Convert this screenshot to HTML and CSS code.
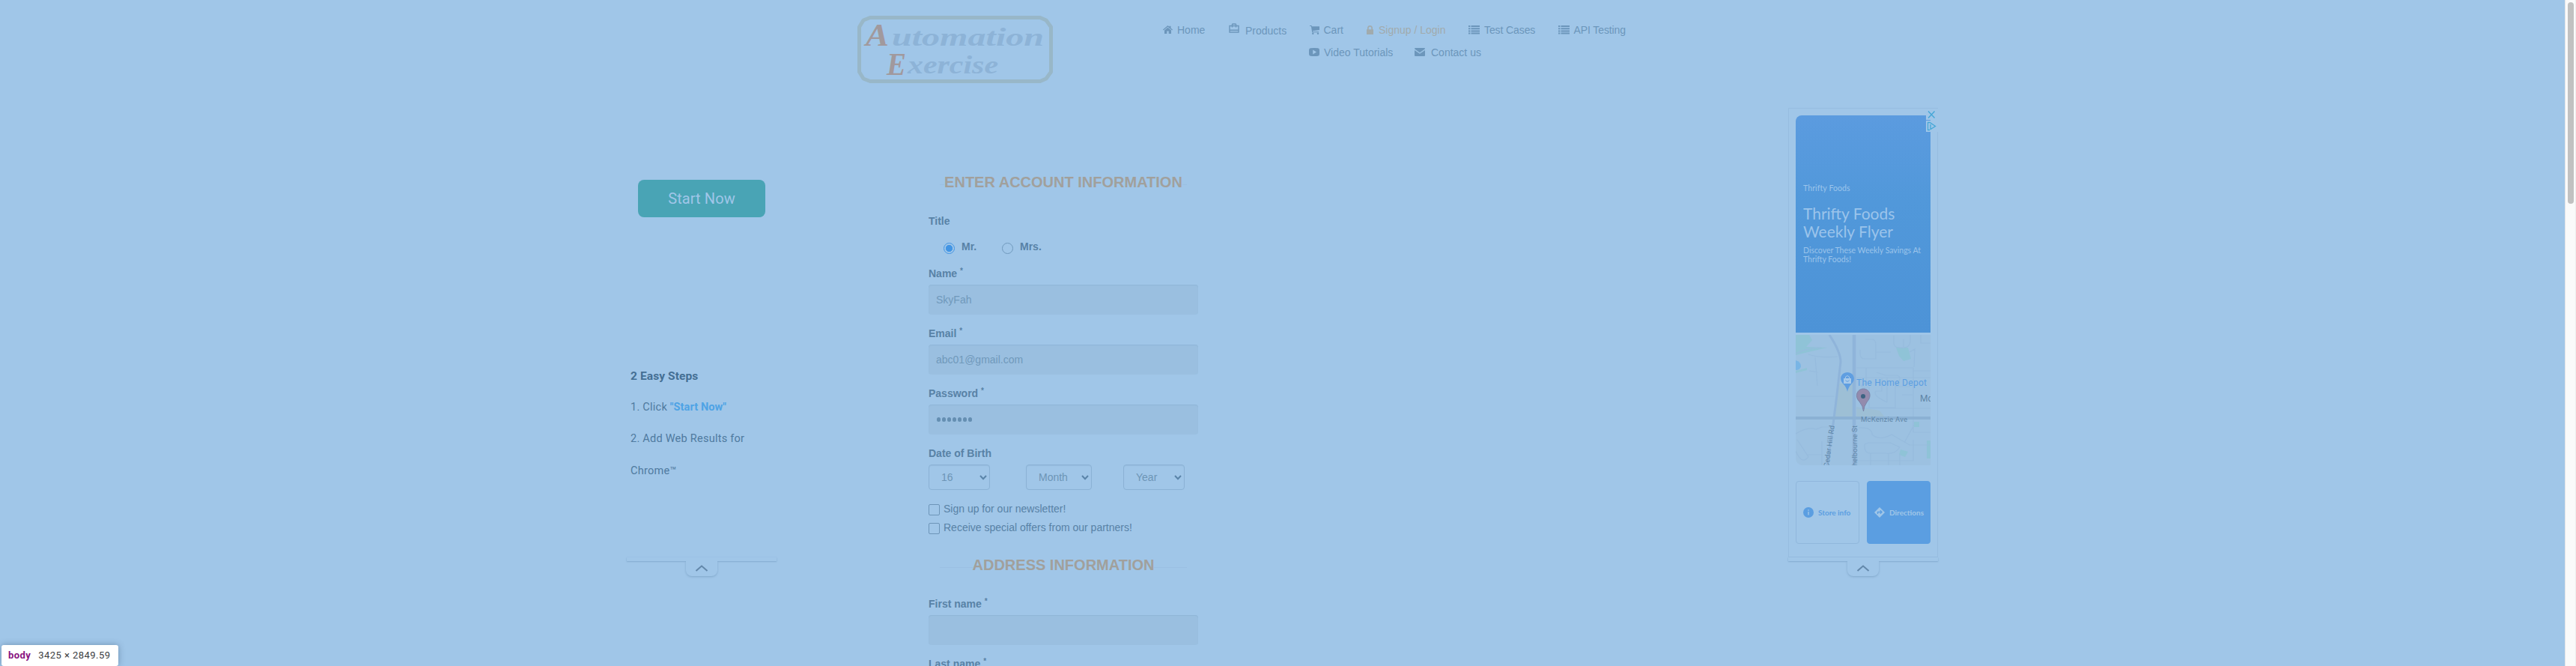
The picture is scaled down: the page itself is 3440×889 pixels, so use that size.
FILE: index.html
```html
<!DOCTYPE html>
<html lang="en">
<head>
<meta charset="utf-8">
<title>Automation Exercise - Signup</title>
<link rel="stylesheet" href="styles.css">
</head>
<body>
<svg width="0" height="0" class="defs">
  <symbol id="i-list" viewBox="0 0 15 12"><path d="M0 0h2.4v2H0zM0 3.2h2.4v2H0zM0 6.4h2.4v2H0zM0 9.6h2.4v2H0zM3.5 0H15v2H3.5zM3.5 3.2H15v2H3.5zM3.5 6.4H15v2H3.5zM3.5 9.6H15v2H3.5z"/></symbol>
</svg>
<div class="page">
  <header class="header">
    <svg class="logo" viewBox="0 0 261 90" width="261" height="90">
      <path d="M17 2.5H244L252 6L258.500 15V75L252 84L244 87.500H17L8 84L2.500 75V15L8 6Z" fill="none" stroke="#98b7c8" stroke-width="5" stroke-linejoin="round"/>
      <g class="logo-text">
        <text x="11" y="40" class="logo-cap" textLength="31" lengthAdjust="spacingAndGlyphs">A</text>
        <text x="46" y="40" textLength="203" lengthAdjust="spacingAndGlyphs">utomation</text>
        <text x="39" y="79" class="logo-cap" textLength="26" lengthAdjust="spacingAndGlyphs">E</text>
        <text x="67" y="77" textLength="121" lengthAdjust="spacingAndGlyphs">xercise</text>
      </g>
    </svg>
    <nav class="nav">
      <div class="nav-row nav-first">
        <a class="item"><svg width="13" height="11" viewBox="0 0 13 11"><path d="M6.500 0L8.500 1.700V.7H10.500V3.500L13 5.600L12.200 6.500L6.500 1.800L.8 6.500L0 5.600ZM6.500 2.800L11 6.500V11H7.700V7.500H5.300V11H2V6.500Z"/></svg><span>Home</span></a>
        <a class="item products"><svg width="14" height="13" viewBox="0 0 14 13"><path fill="none" stroke="currentColor" stroke-width="1.400" d="M1 3.500H13V12H1ZM4.500 3.500V1.500L5 1H9L9.500 1.500V3.500M1 9.300H13M4.500 3.500V5.500M9.500 3.500V5.500"/></svg><span>Products</span></a>
        <a class="item"><svg width="13" height="12" viewBox="0 0 13 12"><path d="M0 0H2.600L3 1.300H13V6L4 7.200L4.200 8.300H12V9.300H3.200L1.900 1H0Z"/><circle cx="4.300" cy="10.700" r="1.200"/><circle cx="11" cy="10.700" r="1.200"/></svg><span>Cart</span></a>
        <a class="item active"><svg width="9" height="12" viewBox="0 0 9 12"><path fill-rule="evenodd" d="M0 5.300H1V3.500C1 -1.100 8 -1.100 8 3.500V5.300H9V12H0ZM2.700 5.300H6.300V3.500C6.300 1.100 2.700 1.100 2.700 3.500Z"/></svg><span>Signup / Login</span></a>
        <a class="item list"><svg width="15" height="12"><use href="#i-list"/></svg><span>Test Cases</span></a>
        <a class="item list"><svg width="15" height="12"><use href="#i-list"/></svg><span>API Testing</span></a>
      </div>
      <div class="nav-row nav-second">
        <a class="item"><svg width="14" height="11" viewBox="0 0 14 11"><path fill-rule="evenodd" d="M2 .3Q7 -.3 12 .3Q14 .5 14 3V8Q14 10.500 12 10.700Q7 11.300 2 10.700Q0 10.500 0 8V3Q0 .5 2 .3ZM5.200 2.500V8.500L10 5.500Z"/></svg><span>Video Tutorials</span></a>
        <a class="item contact"><svg width="14" height="11" viewBox="0 0 14 11"><path d="M1 0H13Q14 0 14 1.200L7 6.200L0 1.200Q0 0 1 0ZM0 2.900L7 7.700L14 2.900V10Q14 11 13 11H1Q0 11 0 10Z"/></svg><span>Contact us</span></a>
      </div>
    </nav>
  </header>

  <main class="main">
    <aside class="ad-left">
      <div class="left-body">
        <div class="start">Start Now</div>
        <div class="steps">
          <p class="steps-head">2 Easy Steps</p>
          <p>1. Click <b>"Start Now"</b></p>
          <p>2. Add Web Results for Chrome™</p>
        </div>
      </div>
      <div class="bar"></div>
      <div class="tab"><svg width="18" height="10" viewBox="0 0 18 10"><path d="M1.500 8L9 1.500L16.500 8"/></svg></div>
    </aside>

    <section class="form">
      <h2 class="title"><span class="t1">ENTER ACCOUNT INFORMATION</span></h2>
      <div class="label label-title">Title</div>
      <div class="radios">
        <span class="radio on"></span><b class="mr">Mr.</b>
        <span class="radio"></span><b>Mrs.</b>
      </div>
      <div class="group"><div class="label">Name <sup>*</sup></div><div class="input">SkyFah</div></div>
      <div class="group"><div class="label">Email <sup>*</sup></div><div class="input">abc01@gmail.com</div></div>
      <div class="group"><div class="label">Password <sup>*</sup></div><div class="input"><i></i><i></i><i></i><i></i><i></i><i></i><i></i></div></div>
      <div class="label">Date of Birth</div>
      <div class="selects">
        <div class="select">16<svg width="10" height="7" viewBox="0 0 10 7"><path d="M1 1L5 5.300L9 1"/></svg></div>
        <div class="select month">Month<svg width="10" height="7" viewBox="0 0 10 7"><path d="M1 1L5 5.300L9 1"/></svg></div>
        <div class="select">Year<svg width="10" height="7" viewBox="0 0 10 7"><path d="M1 1L5 5.300L9 1"/></svg></div>
      </div>
      <div class="check"><span class="box"></span><span class="c1">Sign up for our newsletter!</span></div>
      <div class="check"><span class="box"></span><span class="c2">Receive special offers from our partners!</span></div>
      <h2 class="title second"><span class="t2">ADDRESS INFORMATION</span></h2>
      <div class="group"><div class="label">First name <sup>*</sup></div><div class="input"></div></div>
      <div class="group"><div class="label">Last name <sup>*</sup></div><div class="input"></div></div>
    </section>

    <aside class="ad-right">
      <div class="frame">
        <div class="hero">
          <div class="brand">Thrifty Foods</div>
          <div class="headline">Thrifty Foods<br>Weekly Flyer</div>
          <div class="desc">Discover These Weekly Savings At<br>Thrifty Foods!</div>
        </div>
        <svg class="map" width="180" height="174" viewBox="0 0 180 174">
          <path d="M0 0H180V174H8Q0 172 0 164Z" fill="#9cc1e1"/>
          <g fill="#8fc3d7"><path d="M0 0H18L22 7L14 16L42 17L25 21L0 27ZM134 17H150L154 32L144 35L138 28ZM0 48L15 44V47L0 51ZM140 153L150 156L146 163L138 160ZM158 116H165V123H158ZM175 141H180V165H175Z"/></g>
          <path d="M0 34Q7 36 7 42Q6 47 0 47Z" fill="#79b5e5"/>
          <path d="M57 65H76V109H52ZM81 96L112 101L118 109H81Z" fill="#9dbfd5"/>
          <g fill="none" stroke="#96bbdd" stroke-width="1.200">
            <path d="M0 25Q12 18 34 17M17 26Q30 31 56 29M26 30L29 68M30 50L18 48M0 82H52M81 44H157V110M157 48H180M93 6H102Q107 6 107 14V32H92Q86 32 86 25V20M108 23H127M131 1V12Q132 18 142 17Q153 18 153 7V0M144 6V16M167 0V11H180M152 23L159 19L158 43M81 57H180M94 44V65Q82 68 92 70H98V97H133V69Q144 56 135 54H120L108 50M122 57V90M122 90Q102 81 107 75H115V58M134 69H153M142 80H156M81 98H180M0 132Q16 122 27 126L35 123H52M0 155Q8 174 17 163L2 140M16 160H36M35 142V174M84 124Q102 123 102 133Q112 142 128 133L152 147H180M92 146Q91 158 100 158H120Q132 160 139 150L126 144H97L92 146M145 144L158 120M157 104V130H180M100 158V174M124 159V174M139 159V174M81 168H157V140"/>
            <path d="M45 0Q60 23 60 36L55 80L49 127L42 174" stroke="#8fb4da" stroke-width="3"/><path d="M78 0V174" stroke="#8fb4da" stroke-width="4.500"/><path d="M0 111H180" stroke="#8bb1d4" stroke-width="4"/>
          </g>
          <path d="M69 76Q68 70 63 65C57 59 61 50 69 50S81 59 75 65Q70 70 69 76Z" fill="#5f9ee1"/><path d="M64 58H74V65H64Z" fill="#a6c9ea"/><path d="M66.500 58V56Q69 53 71.500 56V58" fill="none" stroke="#a6c9ea"/><path d="M66.500 60.500Q69 64 71.500 60.500" fill="none" stroke="#5f9ee1"/>
          <path d="M90.500 102Q90 95 85 89C78 82 82 72 90.500 72S102 82 95.500 89Q91 95 90.500 102Z" fill="#938bad" stroke="#7a83a8"/><circle cx="90" cy="82" r="3" fill="#3d6382"/>
          <g class="map-text">
            <text x="81" y="68" class="depot" textLength="94">The Home Depot</text>
            <text x="166" y="89" class="area">Mc</text>
            <text x="87" y="115.500" textLength="62">McKenzie Ave</text>
            <text transform="translate(44 177) rotate(-82)" textLength="56">Cedar Hill Rd</text>
            <text transform="translate(81.500 175) rotate(-90)" textLength="54">helbourne St</text>
          </g>
        </svg>
        <div class="actions">
          <div class="action"><svg width="14" height="14" viewBox="0 0 14 14"><circle cx="7" cy="7" r="7" fill="#5b9ee1"/><path d="M6.300 3.300H7.700V4.700H6.300ZM6.300 6H7.700V10.500H6.300Z" fill="#a0c6e8"/></svg><span>Store info</span></div>
          <div class="action solid"><svg width="14" height="14" viewBox="0 0 14 14"><path d="M7 0L14 7L7 14L0 7Z" fill="#a0c6e8"/><path d="M4.500 9V6.500H9M7.800 4.300L10 6.500L7.800 8.700" fill="none" stroke="#5b9ee1" stroke-width="1.400"/></svg><span>Directions</span></div>
        </div>
        <svg class="adchoice" width="16" height="31" viewBox="0 0 16 31"><path d="M0 0H16V31H0Z" fill="#a0c6e8"/><path d="M0 15.500H6" stroke="#5b9be0"/><path d="M3 3.500L11.500 12.500M11.500 3.500L3 12.500" stroke="#45a7d7" stroke-width="1.400"/><path d="M5 28.500H2.500V18.500H5L12.500 23.500L6 27.500V21" fill="none" stroke="#45a7d7" stroke-width="1.300"/></svg>
      </div>
      <div class="bar"></div>
      <div class="tab"><svg width="18" height="10" viewBox="0 0 18 10"><path d="M1.500 8L9 1.500L16.500 8"/></svg></div>
    </aside>
  </main>
</div>
<div class="scroll"><div class="thumb"></div></div>
<div class="tip"><b>body</b><span>3425 × 2849.59</span></div>
</body>
</html>
```
FILE: styles.css
```css
* { box-sizing: border-box; }
body { margin: 0; height: 889px; overflow: hidden; display: flex; background: #a0c6e8; font: 14px/20px "Liberation Sans", Arial, sans-serif; color: #5882a6; }
.defs { position: absolute; }
.page { width: 3425px; height: 889px; overflow: hidden; }
.header { height: 144px; padding: 21px 0 0 1145px; display: flex; align-items: flex-start; }
.logo { display: block; }
.logo-text { font: italic bold 34px "Liberation Serif", serif; fill: #8db3d7; }
.logo-cap { fill: #a1999d; font-size: 42px; }
.nav { margin-left: 147px; padding-top: 9px; color: #6c96bb; }
.nav-row { display: grid; height: 30px; }
.nav-first { grid-template-columns: 88px 107.500px 76.500px 136px 119.500px 120px; }
.nav-second { grid-template-columns: 141px 120px; margin-left: 195px; }
.item { display: flex; align-items: flex-start; gap: 6px; white-space: nowrap; height: 20px; }
.item svg { fill: currentColor; margin-top: 4px; flex: none; }
.item.products { padding-top: 1px; gap: 8px; }
.item.products svg { margin-top: 0; }
.item.active { color: #a1abad; gap: 7px; }
.item.list span { letter-spacing: -.1px; }
.item.contact { gap: 8px; }
.main { display: flex; align-items: flex-start; padding-left: 837px; }

.ad-left { width: 200px; font-family: Roboto, sans-serif; }
.left-body { height: 600px; padding: 96px 5px 0; }
.start { width: 170px; height: 50px; margin-left: 10px; border-radius: 8px; background: #49a4b5; color: #a0c6e8; font-size: 20px; line-height: 50px; text-align: center; letter-spacing: .1px; }
.steps { margin-top: 191px; color: #4f7a9f; font-size: 14.500px; line-height: 42.200px; letter-spacing: .25px; }
.steps p { margin: 0; }
.steps b { color: #4ea3e5; letter-spacing: .1px; }
.steps .steps-head { font-weight: bold; font-size: 15.500px; letter-spacing: .1px; color: #446f94; }
.bar { height: 5px; box-shadow: 0 1px 2px #84abce, 0 0 1px #8fb5d8; background: #a0c6e8; position: relative; }
.tab { width: 42px; height: 20px; margin: 0 auto; border-radius: 0 0 8px 8px; background: #a0c6e8; box-shadow: 0 1px 3px #80a7ca; display: flex; align-items: center; justify-content: center; position: relative; clip-path: inset(0 -4px -4px -4px); }
.tab svg { fill: none; stroke: #6388aa; stroke-width: 2; }

.form { width: 360px; margin-left: 203px; padding-top: 88px; }
.title { margin: 0; height: 26px; display: flex; justify-content: center; font-size: 20px; line-height: 22px; color: #a1a09c; white-space: nowrap; background: linear-gradient(#9bc0e3, #9bc0e3) 50% 14px / 330px 1px no-repeat; }
.title span { background: #a0c6e8; }
.label { font-weight: bold; height: 20px; margin-bottom: 5px; white-space: nowrap; }
sup { font-size: 10px; font-weight: bold; line-height: 0; vertical-align: 5px; }
.label-title { margin: 27px 0 0; }
.radios { display: flex; height: 50px; padding: 14px 0 0 20px; }
.radio { width: 15px; height: 15px; border: 1px solid #7099bd; border-radius: 50%; margin: 5px 9px 0 0; }
.radio.on { border-color: #4295e4; background: radial-gradient(circle, #4295e4 4.300px, transparent 5px); }
.mr { width: 54px; }
.group { height: 80px; }
.input { height: 40px; border-radius: 4px; background: #9abfe0; box-shadow: inset 0 1px 1px #8fb5d7; padding: 0 10px; display: flex; align-items: center; color: #7099bb; }
.input i { width: 5.500px; height: 5.500px; background: #658fb2; border-radius: 50%; margin: 0 .75px; }
.selects { display: grid; grid-template-columns: 130px 130px 100px; height: 53px; }
.select { width: 82px; height: 34px; border: 1px solid #8bb2d5; border-radius: 4px; display: flex; align-items: center; justify-content: space-between; padding: 0 3px 0 16px; box-shadow: inset 0 1px 1px #95bbde; color: #6d95b6; }
.select.month { width: 88px; }
.select svg { fill: none; stroke: #5a84a9; stroke-width: 2; }
.check { height: 25px; display: flex; gap: 5px; line-height: 13px; white-space: nowrap; }
.box { width: 15px; height: 15px; border: 1px solid #6d95b8; border-radius: 2px; }
.second { margin: 20px 0 31px; height: 22px; }

.ad-right { width: 200px; margin-left: 788px; }
.frame { position: relative; height: 600px; border: 1px solid #97bde0; padding: 9px; }
.hero { height: 290px; border-radius: 8px 0 0 0; background: linear-gradient(#5b9bdf, #5198da 40%, #4d93d7); color: #9bc4eb; padding: 90px 0 0 10px; font-family: Lato, sans-serif; white-space: nowrap; }
.brand { font-size: 10.500px; line-height: 14px; letter-spacing: .1px; }
.headline { font-size: 21px; line-height: 24px; margin: 15px 0 7px; }
.desc { font-size: 10.500px; line-height: 12px; }
.map { display: block; margin-top: 3px; }
.map-text { font: 9.500px Roboto, sans-serif; fill: #5f86a7; }
.map-text .depot { font-size: 12px; fill: #5b9ee1; }
.map-text .area { font-size: 12px; }
.actions { display: flex; gap: 10px; margin-top: 21px; }
.action { width: 85px; height: 84px; border: 1px solid #90b7dc; border-radius: 4px; display: flex; align-items: center; padding-left: 9px; gap: 6px; font: bold 10px Lato, sans-serif; color: #5b9ee1; white-space: nowrap; }
.action.solid { background: #5b9ee1; border-color: #5b9ee1; color: #a0c6e8; }
.adchoice { position: absolute; right: -1px; top: 0; }

.scroll { width: 15px; height: 889px; background: #fafafa; border-left: 1px solid #e4e5e7; border-right: 1px solid #eee; padding: 3px 0 0 3px; }
.thumb { width: 8px; height: 269px; border-radius: 4px; background: #c1c1c1; }
.tip { position: absolute; left: 2px; top: 861px; width: 156px; height: 28px; border-radius: 3px; background: #fff; box-shadow: 0 0 8px rgba(50,80,110,.45); padding-left: 9px; display: flex; gap: 10px; align-items: center; font: 13px/28px Roboto, sans-serif; letter-spacing: .45px; color: #3c4043; white-space: nowrap; }
.tip b { color: #881280; }
```
